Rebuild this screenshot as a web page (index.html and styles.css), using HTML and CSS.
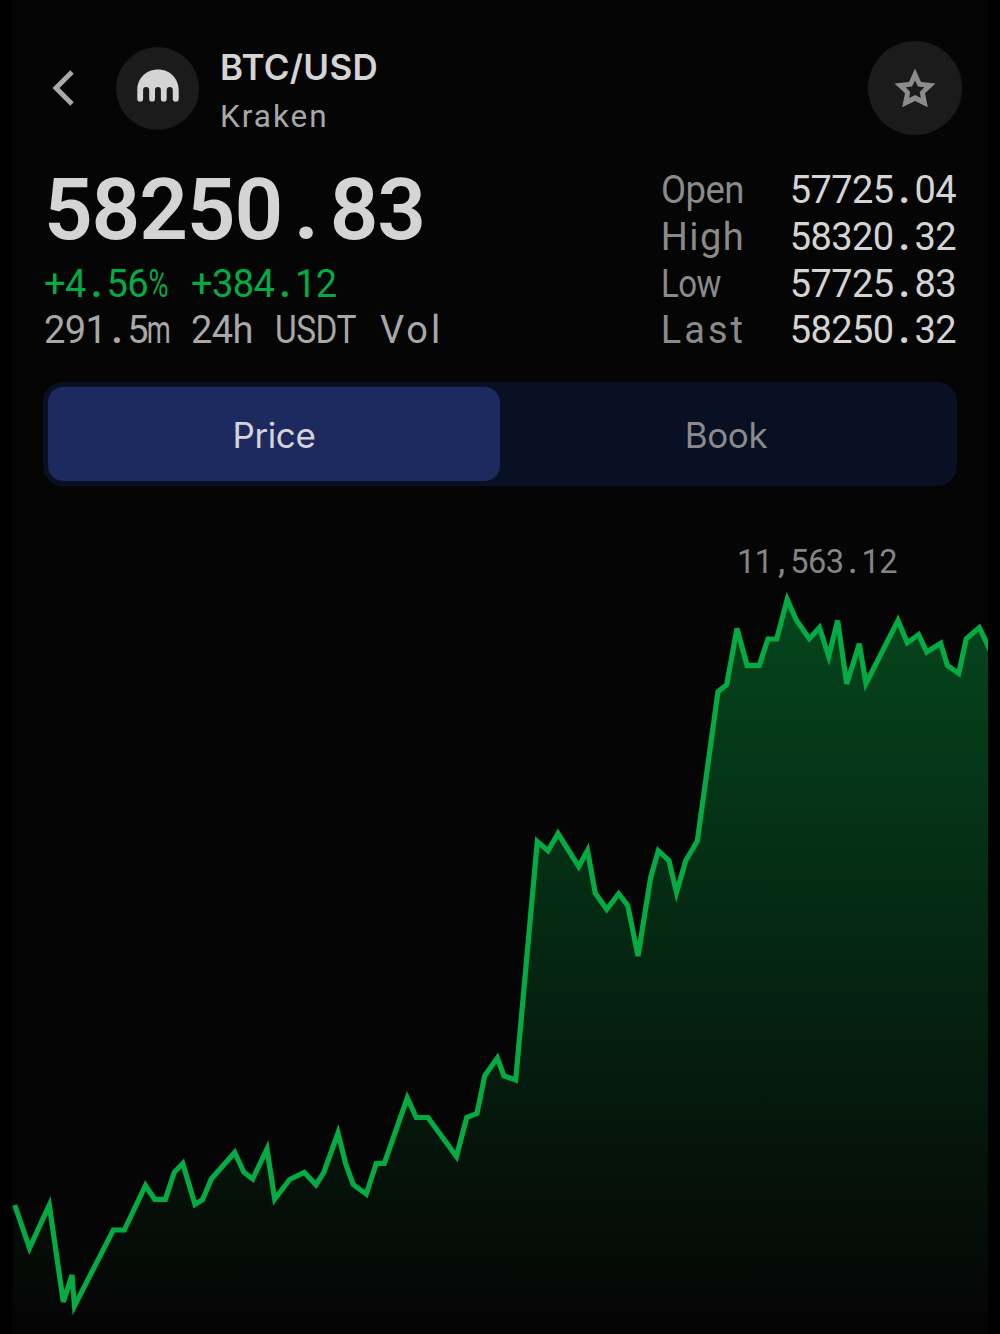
FILE: index.html
```html
<!DOCTYPE html>
<html lang="en">
<head>
    <meta charset="UTF-8">
    <meta name="viewport" content="width=device-width, initial-scale=1.0">
    <title>BTC/USD - Kraken</title>
    <link rel="stylesheet" href="styles.css">
</head>
<body>
    <div class="screen">
        <header class="header">
            <button class="back-btn" aria-label="Back">
                <svg width="22" height="36" viewBox="0 0 22 36"><path d="M20 2 L4 18 L20 34"/></svg>
            </button>
            <div class="logo">
                <svg width="42" height="33" viewBox="0 0 42 33">
                    <path d="M0.3 21 C0.3 9 9.5 0.5 21 0.5 S41.7 9 41.7 21 V29.7 A2.9 2.9 0 0 1 35.8 29.7 V21 A3.05 3.05 0 0 0 29.7 21 V29.7 A2.9 2.9 0 0 1 23.9 29.7 V21 A2.95 2.95 0 0 0 18 21 V29.7 A2.9 2.9 0 0 1 12.2 29.7 V21 A3.05 3.05 0 0 0 6.1 21 V29.7 A2.9 2.9 0 0 1 0.3 29.7 Z"/>
                </svg>
            </div>
            <div class="pair">
                <h1>BTC/USD</h1>
                <p>Kraken</p>
            </div>
            <button class="star-btn" aria-label="Favorite">
                <svg width="42" height="40" viewBox="0 0 42 40">
                    <path fill-rule="evenodd" d="M21 0.5 L27 14 L41.5 15.5 L31 25.3 L33.8 39.3 L21 33 L8.2 39.3 L11 25.3 L0.5 15.5 L15 14 Z M21 12.5 L18 18.5 L11.7 19.3 L16.2 23.9 L15.2 30 L21 27 L26.8 30 L25.8 23.9 L30.3 19.3 L24 18.5 Z"/>
                </svg>
            </button>
        </header>

        <section class="summary">
            <div>
                <div class="price">58250<i>.</i>83</div>
                <div class="change">
                    <span class="first">+4<i>.</i>56<b>%</b></span>
                    <span>+384<i>.</i>12</span>
                </div>
                <div class="volume">
                    <span class="first">291<i>.</i>5<b>m</b></span>
                    <span class="period">24h</span>
                    <span class="unit">USDT</span>
                    <span class="vol">Vol</span>
                </div>
            </div>
            <dl class="stats">
                <dt class="open">Open</dt><dd>57725<i>.</i>04</dd>
                <dt class="high">High</dt><dd>58320<i>.</i>32</dd>
                <dt class="low">Low</dt><dd>57725<i>.</i>83</dd>
                <dt class="last">Last</dt><dd>58250<i>.</i>32</dd>
            </dl>
        </section>

        <nav class="tabs">
            <button class="tab active">Price</button>
            <button class="tab">Book</button>
        </nav>

        <div class="peak">11<i>,</i>563<i>.</i>12</div>
        <svg class="chart" width="976" height="754" viewBox="12 580 976 754">
            <defs>
                <linearGradient id="fade" gradientUnits="userSpaceOnUse" x1="0" y1="600" x2="0" y2="1320">
                    <stop offset="0" stop-color="#03ab42" stop-opacity="0.39"/>
                    <stop offset="1" stop-color="#03ab42" stop-opacity="0"/>
                </linearGradient>
            </defs>
            <path class="area" d="M14.7 1205 L29.5 1248 L49.3 1205 L63.3 1302 L72 1275 L74.5 1306 L113.3 1230 H124.3 L145.5 1185.5 L154.7 1199.3 H165.3 L174.3 1172.3 L182.8 1163.5 L195 1204.5 L202.7 1199.5 L211.3 1179 L234.7 1152.5 L243.8 1172 L252.7 1179 L267 1149 L274.7 1199 L289.7 1179.5 L304.3 1172.5 L316 1184.7 L323.7 1172.7 L338 1133 L345.7 1164 L353.3 1184.7 L366.3 1194 L376.3 1163.3 H384.3 L407.3 1098 L416.3 1117.5 H428 L456.5 1156.5 L466.7 1117.5 L477 1113.3 L484.7 1075.7 L497.3 1058 L504 1076 L515.7 1080 L537.3 841.5 L548 850.7 L558 833.5 L578.7 866.5 L587.5 850.5 L595.3 893.3 L606.7 909.3 L618.7 893.7 L627.7 905.3 L638 956 L650.7 877.3 L658.3 850.7 L669 860.7 L676.5 892.5 L685.7 860.7 L697.3 841 L718 691.7 L726.7 684.7 L737 628.5 L747 665.3 H759.3 L768 639 H776.7 L787.2 599.5 L796.3 620 L809.3 638.7 L819.5 627.5 L828.7 656.5 L837.7 620.5 L846.7 684 L859.3 643.7 L866 683.5 L898 620.5 L907.3 642.7 L918.7 634.7 L926.7 652 L940.7 643.3 L947.3 665.3 L958.7 673.3 L966.3 638.7 L979.3 627.7 L992 654 V1334 H14.7 Z"/>
            <path class="line" d="M14.7 1205 L29.5 1248 L49.3 1205 L63.3 1302 L72 1275 L74.5 1306 L113.3 1230 H124.3 L145.5 1185.5 L154.7 1199.3 H165.3 L174.3 1172.3 L182.8 1163.5 L195 1204.5 L202.7 1199.5 L211.3 1179 L234.7 1152.5 L243.8 1172 L252.7 1179 L267 1149 L274.7 1199 L289.7 1179.5 L304.3 1172.5 L316 1184.7 L323.7 1172.7 L338 1133 L345.7 1164 L353.3 1184.7 L366.3 1194 L376.3 1163.3 H384.3 L407.3 1098 L416.3 1117.5 H428 L456.5 1156.5 L466.7 1117.5 L477 1113.3 L484.7 1075.7 L497.3 1058 L504 1076 L515.7 1080 L537.3 841.5 L548 850.7 L558 833.5 L578.7 866.5 L587.5 850.5 L595.3 893.3 L606.7 909.3 L618.7 893.7 L627.7 905.3 L638 956 L650.7 877.3 L658.3 850.7 L669 860.7 L676.5 892.5 L685.7 860.7 L697.3 841 L718 691.7 L726.7 684.7 L737 628.5 L747 665.3 H759.3 L768 639 H776.7 L787.2 599.5 L796.3 620 L809.3 638.7 L819.5 627.5 L828.7 656.5 L837.7 620.5 L846.7 684 L859.3 643.7 L866 683.5 L898 620.5 L907.3 642.7 L918.7 634.7 L926.7 652 L940.7 643.3 L947.3 665.3 L958.7 673.3 L966.3 638.7 L979.3 627.7 L992 654"/>
        </svg>
    </div>
</body>
</html>
```
FILE: styles.css
```css
* {
    box-sizing: border-box;
}

body {
    margin: 0;
    background: #000;
    color: #d4d4d4;
    font-family: Roboto, sans-serif;
}

button {
    border: none;
    padding: 0;
    background: none;
    font: inherit;
    color: inherit;
    cursor: pointer;
}

.screen {
    width: 976px;
    height: 1334px;
    margin: 0 auto;
    padding-top: 41px;
    background: #050505;
    overflow: hidden;
}

.header {
    display: flex;
    align-items: center;
    height: 94px;
    padding: 0 26px 0 40px;
}

.back-btn {
    display: flex;
    width: 64px;
}

.back-btn path {
    fill: none;
    stroke: #a8a8a8;
    stroke-width: 5;
}

.logo,
.star-btn {
    display: flex;
    align-items: center;
    justify-content: center;
    border-radius: 50%;
    background: #1b1b1b;
}

.logo {
    width: 83px;
    height: 83px;
    padding-bottom: 5px;
    fill: #d4d4d4;
}

.star-btn {
    width: 94px;
    height: 94px;
    margin-left: auto;
    fill: #8c8c8c;
}

.pair {
    margin-left: 21px;
    padding-top: 10px;
}

.pair h1 {
    margin: 0;
    font: 600 35px/48px Inter, sans-serif;
    letter-spacing: 0.3px;
}

.pair p {
    margin: 0;
    color: #a8a8a8;
    font-size: 31.5px;
    line-height: 52px;
    letter-spacing: 2px;
}

.summary {
    display: flex;
    justify-content: space-between;
    height: 187px;
    margin: 32px 32px 0 32px;
    font-size: 38px;
    line-height: 46.8px;
    letter-spacing: -0.6px;
    white-space: nowrap;
}

/* punctuation and wide glyphs share the digit cell width */
i,
b {
    display: inline-block;
    width: 20.85px;
    font-style: normal;
    font-weight: 700;
    text-align: center;
}

b {
    display: inline-flex;
    justify-content: center;
    font-weight: 400;
    transform: scaleX(0.72);
}

.price {
    height: 93.6px;
    font-size: 86px;
    font-weight: 600;
    line-height: 85px;
    letter-spacing: -1.2px;
    transform: scaleX(0.993);
    transform-origin: left;
}

.price i {
    width: 48px;
}

.change,
.volume {
    display: flex;
}

.change {
    color: #03ab42;
}

.volume {
    color: #a8a8a8;
}

.first {
    width: 147px;
}

.period {
    width: 84px;
}

.unit {
    width: 105px;
    transform: scaleX(0.88);
    transform-origin: left;
}

.vol {
    letter-spacing: 3px;
}

.stats {
    display: grid;
    grid-template-columns: 129px auto;
    align-content: start;
    margin: 0;
}

.stats dt {
    color: #8a8a8a;
    transform-origin: left;
}

.stats dd {
    margin: 0;
}

.open {
    transform: scaleX(0.96);
}

.high {
    letter-spacing: 1.4px;
}

.low {
    transform: scaleX(0.87);
}

.last {
    letter-spacing: 3px;
}

.tabs {
    display: flex;
    height: 104px;
    margin: 28px 31px 0;
    padding: 5px;
    border-radius: 20px;
    background: #0a1024;
}

.tab {
    flex: 1;
    padding-top: 1px;
    border-radius: 15px;
    color: #8a8a8a;
    font: 400 35px Inter, sans-serif;
    letter-spacing: -0.4px;
}

.tab.active {
    background: #1d2a60;
    color: #d4d4d8;
}

.peak {
    height: 94px;
    padding: 55.5px 0 0 725px;
    color: #858585;
    font-size: 32.5px;
    line-height: 40px;
    letter-spacing: -0.5px;
}

.peak i {
    width: 17.8px;
    font-weight: 500;
}

.chart {
    display: block;
}

.area {
    fill: url(#fade);
}

.line {
    fill: none;
    stroke: #03ab42;
    stroke-width: 5.2;
}
```
